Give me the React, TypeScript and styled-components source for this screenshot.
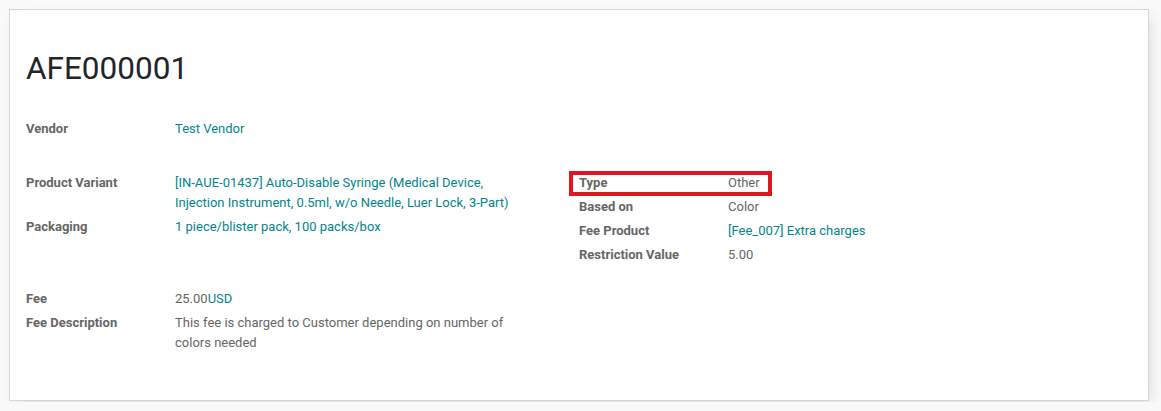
import React from "react";
import styled, { createGlobalStyle } from "styled-components";

const GlobalStyle = createGlobalStyle`
  html, body {
    margin: 0;
    padding: 0;
    background: #f9f9f9;
    font-family: Roboto, "Noto Sans", sans-serif;
    font-size: 13px;
    color: #666666;
  }
`;

interface FieldRow {
  label: string;
  value: React.ReactNode;
  highlight?: boolean;
}

const LINK = "#00868b";

const Page = styled.div`
  padding: 9px 0 0 9px;
  height: 402px;
  box-sizing: border-box;
`;

const Sheet = styled.div`
  width: 1140px;
  height: 392px;
  box-sizing: border-box;
  background: #ffffff;
  border: 1px solid #d3d6dd;
  box-shadow: 4px 6px 14px -4px rgba(0, 0, 0, 0.14);
  padding: 38px 16px 0 16px;
`;

const Title = styled.h1`
  margin: 0;
  font-size: 31.5px;
  font-weight: 400;
  line-height: 41px;
  color: #212529;
`;

const GroupRow = styled.div<{ $top: number }>`
  display: grid;
  grid-template-columns: 553px 553px;
  margin-top: ${({ $top }) => $top}px;
`;

const Group = styled.div`
  display: flex;
  flex-direction: column;
`;

const Row = styled.div`
  position: relative;
  display: grid;
  grid-template-columns: 149px 355px;
  padding: 2px 0;
  line-height: 20px;
`;

const Label = styled.div`
  font-weight: 700;
  color: #666666;
`;

const Value = styled.div`
  color: #666666;
`;

const Link = styled.span`
  color: ${LINK};
`;

const Marker = styled.div`
  position: absolute;
  left: -10px;
  top: 0;
  width: 203px;
  height: 25px;
  box-sizing: border-box;
  border: 4px solid #e3141f;
  pointer-events: none;
`;

const FieldGroup: React.FC<{ rows: FieldRow[] }> = ({ rows }) => (
  <Group>
    {rows.map((r) => (
      <Row key={r.label}>
        <Label>{r.label}</Label>
        <Value>{r.value}</Value>
        {r.highlight && <Marker />}
      </Row>
    ))}
  </Group>
);

const vendorRows: FieldRow[] = [{ label: "Vendor", value: <Link>Test Vendor</Link> }];

const productRows: FieldRow[] = [
  {
    label: "Product Variant",
    value: (
      <Link>
        [IN-AUE-01437] Auto-Disable Syringe (Medical Device, Injection Instrument, 0.5ml, w/o
        Needle, Luer Lock, 3-Part)
      </Link>
    ),
  },
  { label: "Packaging", value: <Link>1 piece/blister pack, 100 packs/box</Link> },
];

const typeRows: FieldRow[] = [
  { label: "Type", value: "Other", highlight: true },
  { label: "Based on", value: "Color" },
  { label: "Fee Product", value: <Link>[Fee_007] Extra charges</Link> },
  { label: "Restriction Value", value: "5.00" },
];

const feeRows: FieldRow[] = [
  {
    label: "Fee",
    value: (
      <>
        25.00<Link>USD</Link>
      </>
    ),
  },
  {
    label: "Fee Description",
    value: "This fee is charged to Customer depending on number of colors needed",
  },
];

export default function App() {
  return (
    <Page>
      <GlobalStyle />
      <Sheet>
        <Title>AFE000001</Title>
        <GroupRow $top={28}>
          <FieldGroup rows={vendorRows} />
        </GroupRow>
        <GroupRow $top={30}>
          <FieldGroup rows={productRows} />
          <FieldGroup rows={typeRows} />
        </GroupRow>
        <GroupRow $top={20}>
          <FieldGroup rows={feeRows} />
        </GroupRow>
      </Sheet>
    </Page>
  );
}
